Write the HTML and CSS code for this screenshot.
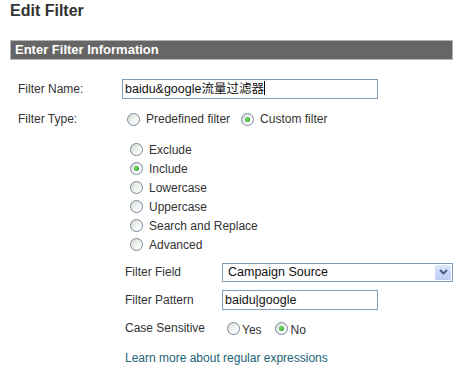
FILE: index.html
```html
<!DOCTYPE html>
<html lang="en">
<head>
    <meta charset="UTF-8">
    <title>Edit Filter</title>
    <link rel="stylesheet" href="styles.css">
</head>
<body>
    <div class="page">
        <h1>Edit Filter</h1>

        <div class="section-bar">Enter Filter Information</div>

        <div class="row name-row">
            <div class="label">Filter Name:</div>
            <div class="field name-field">baidu&amp;google流量过滤器<span class="caret"></span></div>
        </div>

        <div class="row type-row">
            <div class="label">Filter Type:</div>
            <div class="choices">
                <span class="radio"></span><span class="choice-text">Predefined filter</span>
                <span class="radio on"></span><span class="choice-text">Custom filter</span>
            </div>
        </div>

        <div class="type-list">
            <div class="type-item"><span class="radio"></span>Exclude</div>
            <div class="type-item"><span class="radio on"></span>Include</div>
            <div class="type-item"><span class="radio"></span>Lowercase</div>
            <div class="type-item"><span class="radio"></span>Uppercase</div>
            <div class="type-item"><span class="radio"></span>Search and Replace</div>
            <div class="type-item"><span class="radio"></span>Advanced</div>
        </div>

        <div class="custom">
            <div class="row sub-row">
                <div class="sub-label">Filter Field</div>
                <div class="select">
                    <span>Campaign Source</span>
                    <span class="select-btn">
                        <svg width="9" height="6" viewBox="0 0 9 6"><path d="M1 1 L4.5 4.5 L8 1" fill="none" stroke="#4b5f86" stroke-width="2"/></svg>
                    </span>
                </div>
            </div>
            <div class="row sub-row">
                <div class="sub-label">Filter Pattern</div>
                <div class="field pattern-field">baidu|google</div>
            </div>
            <div class="row sub-row">
                <div class="sub-label">Case Sensitive</div>
                <div class="case">
                    <span class="radio"></span><span class="case-text">Yes</span>
                    <span class="radio on"></span><span class="case-text">No</span>
                </div>
            </div>
            <a class="learn" href="#">Learn more about regular expressions</a>
        </div>
    </div>
</body>
</html>
```

FILE: styles.css
```css
body {
    margin: 0;
    background: #fff;
    color: #333;
    font-family: "Liberation Sans", Arial, "Noto Sans CJK SC", sans-serif;
    font-size: 12px;
}

.page {
    padding: 2px 4px 0 10px;
}

h1 {
    margin: 0;
    font-size: 16px;
    line-height: 18px;
    font-weight: bold;
    color: #333;
}

.section-bar {
    margin-top: 20px;
    height: 18px;
    line-height: 18px;
    background: #666;
    border: 1px solid #b4b4b4;
    color: #fff;
    font-size: 13px;
    font-weight: bold;
    padding-left: 4px;
}

.row {
    display: flex;
    align-items: center;
    height: 20px;
}

.name-row {
    margin-top: 19px;
    padding-left: 8px;
}

.type-row {
    margin-top: 10px;
    padding-left: 8px;
}

.label {
    width: 104px;
}

.field {
    box-sizing: border-box;
    height: 20px;
    line-height: 18px;
    border: 1px solid #7f9db9;
    padding: 0 2px;
    color: #111;
    white-space: nowrap;
}

.name-field {
    width: 256px;
    font-size: 12.5px;
}

.caret {
    display: inline-block;
    width: 1px;
    height: 14px;
    background: #000;
    vertical-align: -2px;
}

.radio {
    position: relative;
    display: inline-block;
    box-sizing: border-box;
    width: 13px;
    height: 13px;
    border: 1px solid #73879a;
    border-radius: 50%;
    background: linear-gradient(135deg, #d6d6d0, #fbfbfb 70%);
    flex: none;
}

.radio.on::after {
    content: "";
    position: absolute;
    left: 3px;
    top: 3px;
    width: 5px;
    height: 5px;
    border-radius: 50%;
    background: radial-gradient(circle at 40% 40%, #6fdc6f, #1f9a1f);
}

.choices {
    display: flex;
    align-items: center;
    padding-left: 5px;
}

.choice-text {
    margin-left: 6px;
    margin-right: 11px;
}

.type-list {
    margin-top: 11px;
    padding-left: 120px;
}

.type-item {
    display: flex;
    align-items: center;
    height: 19px;
}

.type-item .radio {
    margin-right: 6px;
}

.custom {
    margin-top: 8px;
    padding-left: 115px;
}

.sub-row {
    margin-bottom: 8px;
}

.sub-label {
    width: 97px;
}

.select {
    box-sizing: border-box;
    width: 231px;
    height: 19px;
    border: 1px solid #7f9db9;
    display: flex;
    align-items: center;
    justify-content: space-between;
    padding: 0 1px 0 5px;
    color: #111;
    font-size: 12.5px;
}

.select-btn {
    width: 16px;
    height: 15px;
    background: linear-gradient(#dce6fb, #bccdf6);
    border-radius: 2px;
    display: flex;
    align-items: center;
    justify-content: center;
}

.pattern-field {
    width: 156px;
    font-size: 12.5px;
}

.case {
    display: flex;
    align-items: center;
    padding-left: 5px;
}

.case-text {
    padding-top: 3px;
    margin-left: 2px;
    margin-right: 13px;
}

.case-text:last-child {
    margin-left: 3px;
}

.learn {
    display: block;
    margin-top: 13px;
    color: #226478;
    text-decoration: none;
}
```
